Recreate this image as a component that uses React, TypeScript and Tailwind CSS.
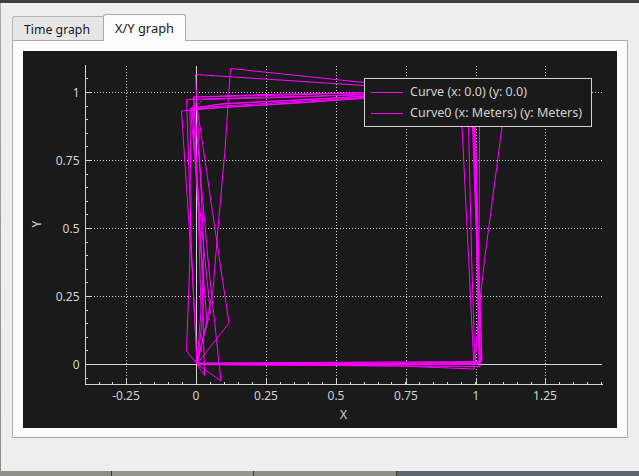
const xs = [126, 196, 266, 336, 406, 476, 545];
const xl = ["-0.25", "0", "0.25", "0.5", "0.75", "1", "1.25"];
const ys = [92, 160, 228, 296, 364];
const yl = ["1", "0.75", "0.5", "0.25", "0"];

const curves = [
  "197,364 186.5,351 189.5,270 191,200 190,110 196,109 300,102.5 364,98.5",
  "197,364 192.3,270 190,240 181.5,111 215,108 300,103 364,98",
  "197,364 229,323 221,270 203.5,150 197.5,110 215,104.5 300,100 364,96",
  "221,381 209,270 193.5,97 290,95 364,92.5",
  "221,381 197,364 204,335 210.5,312 206,270 194,150 190.5,108 215,106.5 364,97.5",
  "197,364 204.5,375.5 202,270 192,108 225,103.5 364,96.5",
  "197,364 207,322 202,260 195.5,150 193,106 198,104.5 203,99.5 300,97 364,94",
  "197,364 192.3,270 186.5,99.5 250,97.5 364,95",
  "197,364 201,310 198,200 194,97 280,94 364,93",
  "197,364 203,315 203.5,240 195.5,74.5 364,85.5",
  "197,364 206,325 213,290 218,228 225,150 230.5,68.5 364,82.5",
];

const right = [
  "462,127 468.7,260 474,369",
  "468.5,127 471.7,260 475,364",
  "472.5,127 476.5,240 479,364",
  "473.5,127 477,250 480,361",
  "474.5,127 477.5,240 480.5,361",
  "475.5,127 478.5,250 481.5,362",
  "479.5,127 479,270 482,361",
  "502,127 484.5,260 479,310 475,364",
  "474,127 478.5,300 480,367",
];

const bottom = [
  "197,363 482,361.5",
  "197,363.5 480,362.5",
  "197,364.5 481,363.5",
  "197,364.5 478,364.5",
  "197,364.5 480,366.5",
  "197,364.5 400,366 474,369",
  "197,363.5 475,364",
];

function Plot() {
  const xMinor = Array.from({ length: 37 }, (_, i) => Math.round(98.5 + i * 13.95)).filter((x) => x < 603);
  const yMinor = Array.from({ length: 24 }, (_, i) => Math.round(377.6 - i * 13.6)).filter((y) => y > 66);
  return (
    <svg width="594" height="377" viewBox="23 51 594 377" className="block">
      <g stroke="#d2d2d2" strokeWidth="1" shapeRendering="crispEdges" fill="none">
        {xs.map((x) => x !== 196 && <path key={x} d={`M${x + 0.5} 66V379`} strokeDasharray="1 2" />)}
        {ys.map((y) => y !== 364 && <path key={y} d={`M91 ${y + 0.5}H603`} strokeDasharray="1 2" />)}
        <path d="M196.5 66V384M85 364.5H602M85.5 65V385M85 384.5H603" />
        {xs.map((x) => <path key={x} d={`M${x + 0.5} 379V384`} />)}
        {ys.map((y) => <path key={y} d={`M86 ${y + 0.5}H91`} />)}
        {xMinor.map((x) => <path key={x} d={`M${x + 0.5} 382V384`} />)}
        {yMinor.map((y) => <path key={y} d={`M86 ${y + 0.5}H88`} />)}
      </g>
      <g stroke="#ff00ff" strokeWidth="1" fill="none">
        {[...curves, ...right, ...bottom].map((p) => <polyline key={p} points={p} />)}
      </g>
      <g fill="#d2d2d2" className="font-['Noto_Sans','Open_Sans',sans-serif] text-[12px]">
        {xs.map((x, i) => (
          <text key={x} x={x} y="400" textAnchor="middle">{xl[i]}</text>
        ))}
        {ys.map((y, i) => (
          <text key={y} x="79.5" y={y + 4.5} textAnchor="end">{yl[i]}</text>
        ))}
        <text x="343.5" y="419" textAnchor="middle">X</text>
        <text transform="translate(41 224) rotate(-90)" textAnchor="middle">Y</text>
      </g>
    </svg>
  );
}

function LegendRow({ label, width }: { label: string; width: number }) {
  return (
    <div className="flex h-[21px] items-center">
      <span className="h-px w-8 shrink-0 bg-[#ff00ff]" />
      <svg width="185" height="20" className="ml-[7px]">
        <text y="13" textLength={width} lengthAdjust="spacingAndGlyphs" fill="#d2d2d2" className="font-['Noto_Sans',sans-serif] text-[12px]">{label}</text>
      </svg>
    </div>
  );
}

function Tab({ label, active, width }: { label: string; active?: boolean; width: number }) {
  return (
    <div className={active
      ? "relative z-10 -mb-px h-[27px] w-[83px] rounded-t-[3px] border border-b-0 border-[#aaaaaa] bg-[#fcfcfc]"
      : "h-6 w-[91px] rounded-tl-[3px] border border-r-0 border-b-0 border-[#b3b3b3] bg-[#e6e6e6]"}>
      <svg width="80" height="23" className="ml-[11px]">
        <text y={active ? 18 : 17} textLength={width} lengthAdjust="spacingAndGlyphs" fill="#171717" className="font-['Noto_Sans',sans-serif] text-[13px]">{label}</text>
      </svg>
    </div>
  );
}

export default function App() {
  return (
    <div className="flex h-[476px] w-[639px] flex-col overflow-hidden bg-[#eeeeee]">
      <div className="h-[3px] shrink-0 bg-[#403e39]" />
      <div className="flex h-[468px] shrink-0">
        <div className="w-px shrink-0 bg-gradient-to-b from-[#aaa9a5] to-[#8d8c85]" />
        <div className="flex w-[638px] flex-col pl-[11px]">
          <div className="flex h-[37px] shrink-0 items-end">
            <Tab label="Time graph" width={66} />
            <Tab label="X/Y graph" width={59} active />
          </div>
          <div className="h-[398px] w-[616px] shrink-0 border border-[#aaaaaa] bg-[#fcfcfc] pt-[10px] pl-[10px]">
            <div className="relative h-[377px] w-[594px] bg-[#1a1a1a]">
              <Plot />
              <div className="absolute top-[27px] left-[341px] h-[49px] w-[228px] border border-[#d2d2d2] bg-[#1a1a1a] pt-[3px] pl-[6px]">
                <LegendRow label="Curve (x: 0.0) (y: 0.0)" width={117} />
                <LegendRow label="Curve0 (x: Meters) (y: Meters)" width={172} />
              </div>
            </div>
          </div>
        </div>
      </div>
      <div className="flex h-[5px] shrink-0">
        <div className="w-[111px] bg-[#8f8e87]" />
        <div className="w-px bg-[#393936]" />
        <div className="w-[141px] bg-[#96958e]" />
        <div className="w-px bg-[#393936]" />
        <div className="w-[142px] bg-[#8f8c84]" />
        <div className="w-px bg-[#393936]" />
        <div className="flex-1 bg-[#5d6470]" />
      </div>
    </div>
  );
}
